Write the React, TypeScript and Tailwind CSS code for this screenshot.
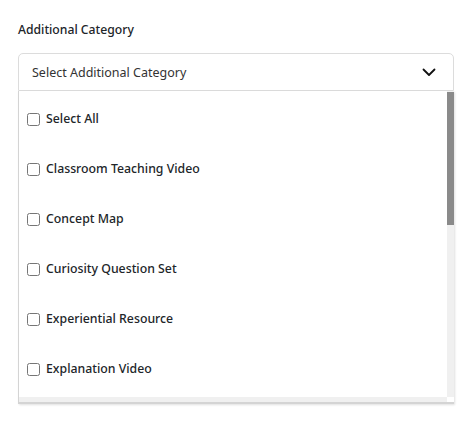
import { FC } from "react";

const categories = [
  "Select All",
  "Classroom Teaching Video",
  "Concept Map",
  "Curiosity Question Set",
  "Experiential Resource",
  "Explanation Video",
];

const Chevron: FC = () => (
  <svg width="14" height="9" viewBox="0 0 14 9" fill="none">
    <path d="M1.5 1.5 7 7l5.5-5.5" stroke="#111" strokeWidth="1.8" strokeLinecap="round" strokeLinejoin="round" />
  </svg>
);

const App: FC = () => {
  return (
    <div
      className="min-h-screen bg-white px-[18px] pt-[20px]"
      style={{ fontFamily: '"Noto Sans", sans-serif' }}
    >
      <label className="block text-[12.2px] leading-[20px] font-medium text-[#212529]">
        Additional Category
      </label>

      <div className="mt-[13px] w-[436px]">
        <div className="flex h-[38px] items-center justify-between rounded-t-[5px] border border-[#dcdcdc] bg-white pl-[13px] pr-[17px]">
          <span className="pt-[2px] text-[12.5px] text-[#333]">Select Additional Category</span>
          <Chevron />
        </div>

        {/* dropdown panel with its scrollbars */}
        <div className="flex h-[313px] flex-col border-b-2 border-l border-[#d4d4d4] bg-white shadow-[1px_1px_2px_rgba(0,0,0,0.12)]">
          <div className="flex min-h-0 flex-1">
            <ul className="flex-1 overflow-hidden pt-[3px]">
              {categories.map((c) => (
                <li key={c} className="flex h-[50px] items-center pl-[8px]">
                  <input type="checkbox" className="m-0 h-[13px] w-[13px]" />
                  <span className="ml-[6px] whitespace-nowrap text-[12.3px] font-medium text-[#212529]">{c}</span>
                </li>
              ))}
            </ul>
            <div className="w-[7px] bg-[#f0f0f0] pt-[1px]">
              <div className="h-[133px] bg-[#8a8a8a]" />
            </div>
          </div>
          <div className="flex h-[5px]">
            <div className="flex-1 bg-[#f0f0f0]" />
            <div className="w-[7px] bg-white" />
          </div>
        </div>
      </div>
    </div>
  );
};

export default App;
